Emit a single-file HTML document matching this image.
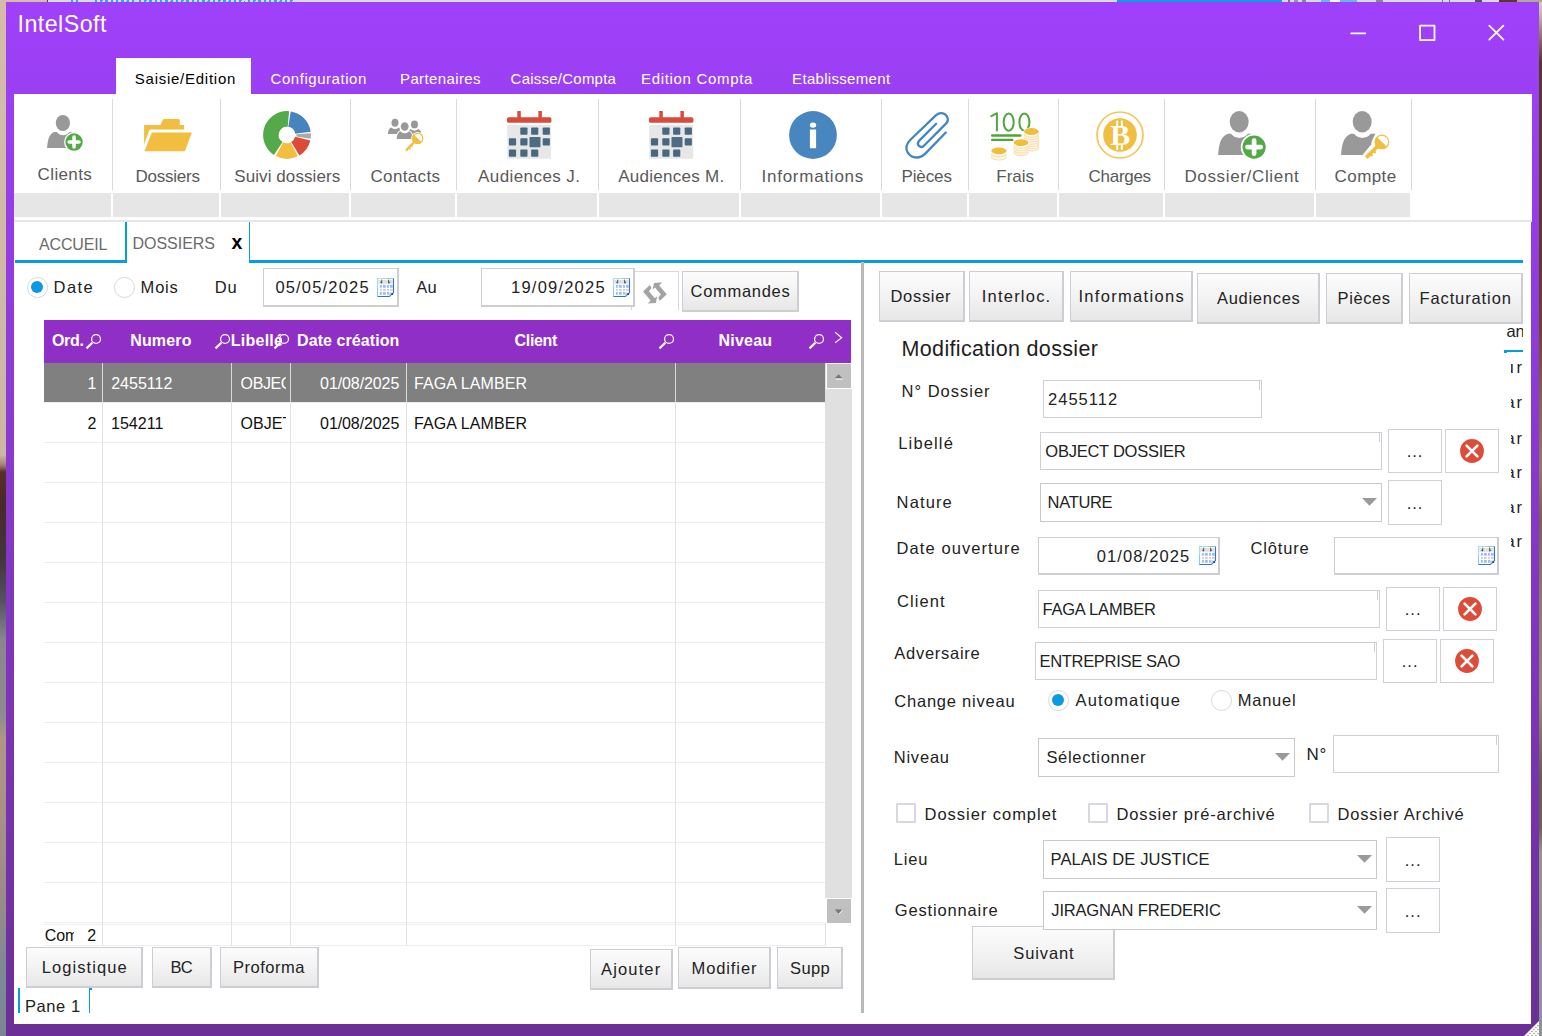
<!DOCTYPE html>
<html lang="fr"><head><meta charset="utf-8"><title>IntelSoft</title>
<style>
html,body{margin:0;padding:0;}
body{width:1542px;height:1036px;position:relative;overflow:hidden;background:#d6bba9;font-family:"Liberation Sans",sans-serif;}
div{position:absolute;box-sizing:border-box;}
svg{position:absolute;overflow:visible;}
.t{white-space:nowrap;font-family:"Liberation Sans",sans-serif;}
.btn{border-style:solid;border-color:#cdced3;border-width:1px 2px 2px 1px;background:linear-gradient(180deg,#fcfcfc 0%,#f4f4f4 45%,#e7e7e7 100%);}
.inp{border-style:solid;border-color:#cdced4;border-width:1px 2px 2px 1px;background:#fff;}
.sq{border:1px solid #d0d1d7;background:#fff;}
.sep{background:#dadada;}
.gb{background:#e6e6e6;}
.txt{border:1px solid #cfd0d6;background:#fff;}
.txt::after{content:'';position:absolute;right:0;top:0;width:1px;height:9px;background:#cfd0d6;right:0.8px;}
.sel{border:1px solid #c9c9c9;background:#fff;}

</style></head>
<body>
<div style="left:0px;top:0px;width:8px;height:1036px;background:linear-gradient(180deg,#d6bba9 0px,#cdb6a5 455px,#a57f7b 465px,#5a2e2a 472px,#48292b 505px,#45353d 560px,#555060 600px,#8a8590 640px,#8f8a90 715px,#b09585 740px,#a89088 820px,#9a8a8a 900px,#7f8a95 960px,#7a8793 1036px);"></div>
<div style="left:1536px;top:0px;width:6px;height:1036px;background:linear-gradient(180deg,#d4ccbc 0px,#c9bdb2 12px,#8a6a58 40px,#5a3828 62px,#5f3c2a 260px,#6b4630 330px,#84644f 400px,#94786a 470px,#7a6050 520px,#8c7c6e 600px,#978a7c 700px,#6a5e54 776px,#6a6258 828px,#94948e 852px,#8a9498 1036px);"></div>
<div style="left:0px;top:0px;width:1542px;height:2px;background:#d9dbd8;"></div>
<div style="left:0px;top:0px;width:47px;height:2px;background:#d6bba9;"></div>
<div style="left:47px;top:0px;width:1.2px;height:2px;background:#444;"></div>
<div style="left:1117px;top:0px;width:165px;height:2px;background:#0b9de6;"></div>
<div style="left:71px;top:0px;width:7px;height:2px;background:repeating-linear-gradient(100deg,#2aa6ea 0px,#2aa6ea 2.4px,#d9dbd8 2.4px,#d9dbd8 5.2px);"></div>
<div style="left:95px;top:0px;width:40px;height:2px;background:repeating-linear-gradient(100deg,#2aa6ea 0px,#2aa6ea 2.4px,#d9dbd8 2.4px,#d9dbd8 5.2px);"></div>
<div style="left:139px;top:0px;width:106px;height:2px;background:repeating-linear-gradient(100deg,#2aa6ea 0px,#2aa6ea 2.4px,#d9dbd8 2.4px,#d9dbd8 5.2px);"></div>
<div style="left:248px;top:0px;width:46px;height:2px;background:repeating-linear-gradient(100deg,#2aa6ea 0px,#2aa6ea 2.4px,#d9dbd8 2.4px,#d9dbd8 5.2px);"></div>
<div style="left:1288px;top:0px;width:2px;height:2px;background:#777;"></div>
<div style="left:1294px;top:0px;width:4px;height:2px;background:#999;"></div>
<div style="left:1302px;top:0px;width:4px;height:2px;background:#888;"></div>
<div style="left:1321px;top:0px;width:9px;height:2px;background:#6ab4ee;"></div>
<div style="left:1330px;top:0px;width:10px;height:2px;background:#f4f8fc;"></div>
<div style="left:1340px;top:0px;width:17px;height:2px;background:#6ab4ee;"></div>
<div style="left:1376px;top:0px;width:7px;height:2px;background:#888;"></div>
<div style="left:1442px;top:0px;width:1px;height:2px;background:#777;"></div>
<div style="left:1449px;top:0px;width:1px;height:2px;background:#777;"></div>
<div style="left:1475px;top:0px;width:7px;height:2px;background:#555;"></div>
<div style="left:1499px;top:0px;width:18px;height:2px;background:#5e3626;"></div>
<div style="left:1517px;top:0px;width:25px;height:2px;background:#b5a595;"></div>
<div style="left:6px;top:2px;width:1532.6px;height:1034px;background:linear-gradient(180deg,#9f41fb 0%,#6b2f96 100%);"></div>
<svg style="left:1340px;top:16px" width="180" height="34" viewBox="1340 16 180 34"><g stroke="#fff" stroke-width="1.8" fill="none" stroke-linecap="round" stroke-linejoin="round"><path d="M1351.2 33.3H1365.3"/><rect x="1420.1" y="25.7" width="14.4" height="14.4"/><path d="M1489.3 25.6L1503.4 39.6M1503.4 25.6L1489.3 39.6"/></g></svg>
<div style="left:116px;top:58px;width:135px;height:37px;background:#fff;"></div>
<div style="left:14px;top:94px;width:1517px;height:930px;background:#fff;"></div>
<div style="left:14px;top:94px;width:1518px;height:128px;background:#fff;"></div>
<div class="sep" style="left:111.8px;top:99px;width:1.4px;height:91px;"></div>
<div class="sep" style="left:219.8px;top:99px;width:1.4px;height:91px;"></div>
<div class="sep" style="left:349.8px;top:99px;width:1.4px;height:91px;"></div>
<div class="sep" style="left:455.8px;top:99px;width:1.4px;height:91px;"></div>
<div class="sep" style="left:597.8px;top:99px;width:1.4px;height:91px;"></div>
<div class="sep" style="left:739.8px;top:99px;width:1.4px;height:91px;"></div>
<div class="sep" style="left:880.8px;top:99px;width:1.4px;height:91px;"></div>
<div class="sep" style="left:967.8px;top:99px;width:1.4px;height:91px;"></div>
<div class="sep" style="left:1057.8px;top:99px;width:1.4px;height:91px;"></div>
<div class="sep" style="left:1163.8px;top:99px;width:1.4px;height:91px;"></div>
<div class="sep" style="left:1314.8px;top:99px;width:1.4px;height:91px;"></div>
<div class="sep" style="left:1410.8px;top:99px;width:1.4px;height:91px;"></div>
<div class="gb" style="left:14px;top:193px;width:97px;height:24px;"></div>
<div class="gb" style="left:113px;top:193px;width:106px;height:24px;"></div>
<div class="gb" style="left:221px;top:193px;width:128px;height:24px;"></div>
<div class="gb" style="left:351px;top:193px;width:104px;height:24px;"></div>
<div class="gb" style="left:457px;top:193px;width:140px;height:24px;"></div>
<div class="gb" style="left:599px;top:193px;width:140px;height:24px;"></div>
<div class="gb" style="left:741px;top:193px;width:139px;height:24px;"></div>
<div class="gb" style="left:882px;top:193px;width:85px;height:24px;"></div>
<div class="gb" style="left:969px;top:193px;width:88px;height:24px;"></div>
<div class="gb" style="left:1059px;top:193px;width:104px;height:24px;"></div>
<div class="gb" style="left:1165px;top:193px;width:149px;height:24px;"></div>
<div class="gb" style="left:1316px;top:193px;width:94px;height:24px;"></div>
<div style="left:14px;top:220px;width:1518px;height:2px;background:#e6e6e6;"></div>
<svg style="left:46.7px;top:114.8px" width="36.2" height="36.2" viewBox="0 0 48.3 48.3"><path d="M0.1 43.9 C0.8 34 2.5 25 10 22.7 L32.5 22.7 C35 23.5 36.5 25 38 28 L38 43.9 Z" fill="#999999"/><circle cx="21.4" cy="16.6" r="10.4" fill="#fff"/><ellipse cx="21.2" cy="10.7" rx="9.5" ry="10.7" fill="#999999"/><circle cx="36.1" cy="36.1" r="13.3" fill="#fff"/><circle cx="36.1" cy="36.1" r="11.6" fill="#53a946"/><path d="M29.5 36.1H42.7M36.1 29.5V42.7" stroke="#fff" stroke-width="4.7" stroke-linecap="round"/></svg>
<svg style="left:140px;top:110px" width="56" height="50" viewBox="0 0 56 50"><path d="M4.1 14.9 L20.6 14.9 L22.8 9.8 Q23.3 9 24.3 9 L38.3 9 Q39.8 9 39.8 10.5 L39.8 14.9 L44.1 14.9 L44.1 19.5 L11 19.5 Q9.5 19.5 9 21 L4.1 34.5 Z" fill="#f1be3f"/><path d="M11.9 22.5 L51.9 22.5 L45.2 40.3 Q44.8 41.2 43.8 41.2 L4.4 41.2 Z" fill="#f1be3f"/></svg>
<svg style="left:262.9px;top:110.9px" width="48" height="48" viewBox="0 0 48 48"><path d="M10.98 44.04 A23.9 23.9 0 0 1 26.08 0.19 L24.72 15.73 A8.3 8.3 0 0 0 19.48 30.96 Z" fill="#54a948"/><path d="M27.74 0.39 A23.9 23.9 0 0 1 47.67 20.67 L32.22 22.84 A8.3 8.3 0 0 0 25.30 15.80 Z" fill="#4784bd"/><path d="M47.84 22.33 A23.9 23.9 0 0 1 47.61 27.74 L33.38 25.49 A9.5 9.5 0 0 0 33.48 23.34 Z" fill="#a9abab"/><path d="M47.29 29.38 A23.9 23.9 0 0 1 36.31 44.49 L28.27 31.11 A8.3 8.3 0 0 0 32.09 25.87 Z" fill="#dc4a38"/><path d="M34.85 45.30 A23.9 23.9 0 0 1 12.78 45.10 L20.10 31.33 A8.3 8.3 0 0 0 27.77 31.40 Z" fill="#f1be3f"/></svg>
<svg style="left:380px;top:110px" width="50" height="50" viewBox="0 0 50 50"><path d="M27.28 25.61 C27.68 21.43 28.88 19.44 31.27 18.77 L37.73 18.77 C40.12 19.44 41.32 21.43 41.72 25.61 Z" fill="#999999"/><circle cx="34.5" cy="15.83" r="4.82" fill="#fff"/><ellipse cx="34.5" cy="14.400000000000006" rx="3.52" ry="3.94" fill="#999999"/><path d="M7.78 24.01 C8.18 19.83 9.38 17.83 11.77 17.17 L18.23 17.17 C20.62 17.83 21.82 19.83 22.22 24.01 Z" fill="#999999"/><circle cx="15.0" cy="14.22" r="4.82" fill="#fff"/><ellipse cx="15.0" cy="12.799999999999997" rx="3.52" ry="3.94" fill="#999999"/><path d="M16.72 28.89 C17.12 24.27 18.32 22.07 21.13 21.33 L28.27 21.33 C31.08 22.07 32.28 24.27 32.68 28.89 Z" fill="#fff" stroke="#fff" stroke-width="2.4"/><path d="M16.72 28.89 C17.12 24.27 18.32 22.07 21.13 21.33 L28.27 21.33 C31.08 22.07 32.28 24.27 32.68 28.89 Z" fill="#999999"/><circle cx="24.69999999999999" cy="18.07" r="5.19" fill="#fff"/><ellipse cx="24.69999999999999" cy="16.5" rx="3.89" ry="4.35" fill="#999999"/><path d="M34.99 31.23 L26.00 40.60" stroke="#fff" stroke-width="4.2"/><circle cx="37.69999999999999" cy="28.400000000000006" r="6.5" fill="#fff"/><circle cx="37.69999999999999" cy="28.400000000000006" r="5.1" fill="#fff" stroke="#f1be3f" stroke-width="1.2"/><path d="M33.66 24.52 A5.6 5.6 0 0 0 41.74 32.28 Z" fill="#f1be3f"/><path d="M34.99 31.23 L26.00 40.60" stroke="#f1be3f" stroke-width="2.4"/><path d="M31.26 35.11 l1.56 1.50" stroke="#f1be3f" stroke-width="1.32"/><path d="M28.92 37.55 l1.56 1.50" stroke="#f1be3f" stroke-width="1.32"/></svg>
<svg style="left:506.8px;top:110.9px" width="44.4" height="47.8" viewBox="0 0 44.4 47.8"><rect x="0" y="6.2" width="44.4" height="5.6" rx="1.6" fill="#d94c3d"/><rect x="10.3" y="0" width="3.5" height="8" fill="#d94c3d"/><rect x="31.4" y="0" width="3.5" height="8" fill="#d94c3d"/><rect x="0.3" y="14" width="43.8" height="33.8" fill="#e7e7e7"/><rect x="13.3" y="16.5" width="7.2" height="7.2" rx="0.8" fill="#48687f"/><rect x="24.1" y="16.5" width="7.2" height="7.2" rx="0.8" fill="#48687f"/><rect x="35.7" y="16.5" width="7.2" height="7.2" rx="0.8" fill="#48687f"/><rect x="1.9" y="27.3" width="7.2" height="7.2" rx="0.8" fill="#48687f"/><rect x="13.3" y="27.3" width="7.2" height="7.2" rx="0.8" fill="#48687f"/><rect x="35.7" y="27.3" width="7.2" height="7.2" rx="0.8" fill="#48687f"/><rect x="1.9" y="38.6" width="7.2" height="7.2" rx="0.8" fill="#48687f"/><rect x="13.3" y="38.6" width="7.2" height="7.2" rx="0.8" fill="#48687f"/><rect x="24.1" y="38.6" width="7.2" height="7.2" rx="0.8" fill="#48687f"/><rect x="22.5" y="25.9" width="11" height="10.4" rx="0.8" fill="#4f6c82"/></svg>
<svg style="left:648.9px;top:110.9px" width="44.4" height="47.8" viewBox="0 0 44.4 47.8"><rect x="0" y="6.2" width="44.4" height="5.6" rx="1.6" fill="#d94c3d"/><rect x="10.3" y="0" width="3.5" height="8" fill="#d94c3d"/><rect x="31.4" y="0" width="3.5" height="8" fill="#d94c3d"/><rect x="0.3" y="14" width="43.8" height="33.8" fill="#e7e7e7"/><rect x="13.3" y="16.5" width="7.2" height="7.2" rx="0.8" fill="#48687f"/><rect x="24.1" y="16.5" width="7.2" height="7.2" rx="0.8" fill="#48687f"/><rect x="35.7" y="16.5" width="7.2" height="7.2" rx="0.8" fill="#48687f"/><rect x="1.9" y="27.3" width="7.2" height="7.2" rx="0.8" fill="#48687f"/><rect x="13.3" y="27.3" width="7.2" height="7.2" rx="0.8" fill="#48687f"/><rect x="35.7" y="27.3" width="7.2" height="7.2" rx="0.8" fill="#48687f"/><rect x="1.9" y="38.6" width="7.2" height="7.2" rx="0.8" fill="#48687f"/><rect x="13.3" y="38.6" width="7.2" height="7.2" rx="0.8" fill="#48687f"/><rect x="24.1" y="38.6" width="7.2" height="7.2" rx="0.8" fill="#48687f"/><rect x="22.5" y="25.9" width="11" height="10.4" rx="0.8" fill="#4f6c82"/></svg>
<svg style="left:789px;top:111px" width="48" height="48" viewBox="0 0 48 48"><circle cx="24" cy="24" r="23.9" fill="#4786be"/><ellipse cx="24" cy="14.1" rx="3.2" ry="2.6" fill="#fff"/><rect x="20.9" y="18.5" width="6.2" height="18.7" rx="0.6" fill="#fff"/></svg>
<svg style="left:900px;top:108px" width="54" height="54" viewBox="0 0 54 54"><path d="M45.8 24.5 L25.3 45.6 C21 50 12.5 52 7.6 44.4 C5 39.5 7 35 10.7 31.5 L36.1 7.2 C40 3.6 46.2 5 47.6 10 C48.6 13 47 15 44.7 16.9 L24.2 37.5 C22 40 19.3 39 18.2 36.9 C17.4 35.2 18 34 19.3 32.6 L36.1 15.8" fill="none" stroke="#4386c4" stroke-width="2.3" stroke-linecap="round" stroke-linejoin="round"/></svg>
<svg style="left:990px;top:110.5px" width="50" height="50" viewBox="0 0 50 50"><g fill="none" stroke="#4fa63d" stroke-width="2.0" stroke-linecap="round" stroke-linejoin="round"><path d="M1.4 5.2 L6.9 2.2 L6.9 19.6"/><ellipse cx="18.7" cy="11.2" rx="5" ry="8.6"/><ellipse cx="34.4" cy="11.2" rx="5" ry="8.6"/></g><rect x="1" y="23.3" width="30.5" height="2.5" rx="1.2" fill="#4fa63d"/><rect x="1" y="27.7" width="22.5" height="2.4" rx="1.2" fill="#4fa63d"/><path d="M33.9 20.6 L33.9 36.5 A7.5 3.5 0 0 0 48.9 36.5 L48.9 20.6Z" fill="#fff8ec"/><path d="M33.9 36.50 A7.5 3.5 0 0 0 48.9 36.50" fill="none" stroke="#f7deb0" stroke-width="1.1"/><path d="M33.9 34.23 A7.5 3.5 0 0 0 48.9 34.23" fill="none" stroke="#f7deb0" stroke-width="1.1"/><path d="M33.9 31.96 A7.5 3.5 0 0 0 48.9 31.96" fill="none" stroke="#f7deb0" stroke-width="1.1"/><path d="M33.9 29.69 A7.5 3.5 0 0 0 48.9 29.69" fill="none" stroke="#f7deb0" stroke-width="1.1"/><path d="M33.9 27.41 A7.5 3.5 0 0 0 48.9 27.41" fill="none" stroke="#f7deb0" stroke-width="1.1"/><path d="M33.9 25.14 A7.5 3.5 0 0 0 48.9 25.14" fill="none" stroke="#f7deb0" stroke-width="1.1"/><path d="M33.9 22.87 A7.5 3.5 0 0 0 48.9 22.87" fill="none" stroke="#f7deb0" stroke-width="1.1"/><ellipse cx="41.4" cy="20.6" rx="8.1" ry="4.1" fill="#fff"/><ellipse cx="41.4" cy="20.6" rx="7.5" ry="3.5" fill="#f3bd3c"/><path d="M23.8 31.7 L23.8 41 A7.3 3.4 0 0 0 38.4 41 L38.4 31.7Z" fill="#fff8ec"/><path d="M23.8 41.00 A7.3 3.4 0 0 0 38.4 41.00" fill="none" stroke="#f7deb0" stroke-width="1.1"/><path d="M23.8 38.67 A7.3 3.4 0 0 0 38.4 38.67" fill="none" stroke="#f7deb0" stroke-width="1.1"/><path d="M23.8 36.35 A7.3 3.4 0 0 0 38.4 36.35" fill="none" stroke="#f7deb0" stroke-width="1.1"/><path d="M23.8 34.02 A7.3 3.4 0 0 0 38.4 34.02" fill="none" stroke="#f7deb0" stroke-width="1.1"/><ellipse cx="31.1" cy="31.7" rx="7.8999999999999995" ry="4.0" fill="#fff"/><ellipse cx="31.1" cy="31.7" rx="7.3" ry="3.4" fill="#f3bd3c"/><path d="M1.3000000000000007 39.8 L1.3000000000000007 45.6 A7.6 3.4 0 0 0 16.5 45.6 L16.5 39.8Z" fill="#fff8ec"/><path d="M1.3000000000000007 45.60 A7.6 3.4 0 0 0 16.5 45.60" fill="none" stroke="#f7deb0" stroke-width="1.1"/><path d="M1.3000000000000007 42.70 A7.6 3.4 0 0 0 16.5 42.70" fill="none" stroke="#f7deb0" stroke-width="1.1"/><ellipse cx="8.9" cy="39.8" rx="8.2" ry="4.0" fill="#fff"/><ellipse cx="8.9" cy="39.8" rx="7.6" ry="3.4" fill="#f3bd3c"/></svg>
<svg style="left:1096px;top:111px" width="48" height="48" viewBox="0 0 48 48"><circle cx="24" cy="24" r="23" fill="none" stroke="#f3c55a" stroke-width="1.7"/><circle cx="24" cy="24" r="16.8" fill="#f1be3f"/><text x="14.2" y="34.3" font-family="Liberation Serif, serif" font-weight="700" font-size="30" fill="#fff">B</text><rect x="20.2" y="9.6" width="2" height="5.5" fill="#fff"/><rect x="24.8" y="9.6" width="2" height="5.5" fill="#fff"/><rect x="20.2" y="33.6" width="2" height="5.4" fill="#fff"/><rect x="24.8" y="33.6" width="2" height="5.4" fill="#fff"/></svg>
<svg style="left:1218px;top:111px" width="48.3" height="48.3" viewBox="0 0 48.3 48.3"><path d="M0.1 43.9 C0.8 34 2.5 25 10 22.7 L32.5 22.7 C35 23.5 36.5 25 38 28 L38 43.9 Z" fill="#999999"/><circle cx="21.4" cy="16.6" r="10.4" fill="#fff"/><ellipse cx="21.2" cy="10.7" rx="9.5" ry="10.7" fill="#999999"/><circle cx="36.1" cy="36.1" r="13.3" fill="#fff"/><circle cx="36.1" cy="36.1" r="11.6" fill="#53a946"/><path d="M29.5 36.1H42.7M36.1 29.5V42.7" stroke="#fff" stroke-width="4.7" stroke-linecap="round"/></svg>
<svg style="left:1341px;top:111px" width="50" height="50" viewBox="0 0 50 50"><path d="M0.1 43.9 C0.8 34 2.5 25 10 22.7 L32.5 22.7 L34.6 22.7 C32 27 30.5 30 30.2 33.5 L21.5 43.9 Z" fill="#999999"/><circle cx="21.4" cy="16.6" r="10.4" fill="#fff"/><ellipse cx="21.2" cy="10.7" rx="9.5" ry="10.7" fill="#999999"/><path d="M37.29 34.51 L25.20 46.60" stroke="#fff" stroke-width="5.6"/><circle cx="40.9" cy="30.9" r="8.2" fill="#fff"/><circle cx="40.9" cy="30.9" r="6.8" fill="#fff" stroke="#f1be3f" stroke-width="1.2"/><path d="M35.74 25.74 A7.3 7.3 0 0 0 46.06 36.06 Z" fill="#f1be3f"/><path d="M37.29 34.51 L25.20 46.60" stroke="#f1be3f" stroke-width="3.8"/><path d="M32.27 39.53 l2.42 2.42" stroke="#f1be3f" stroke-width="2.09"/><path d="M29.12 42.67 l2.42 2.42" stroke="#f1be3f" stroke-width="2.09"/></svg>
<div style="left:15px;top:260px;width:111px;height:3px;background:#059de0;"></div>
<div style="left:249px;top:260px;width:1274px;height:3px;background:#059de0;"></div>
<div style="left:125px;top:222px;width:2px;height:41px;background:#059de0;"></div>
<div style="left:248.7px;top:222px;width:1.5px;height:41px;background:#059de0;"></div>
<div style="left:27.1px;top:277.0px;width:20.8px;height:20.8px;border-radius:50%;border:1.3px solid #d6d8de;background:#fff;"></div>
<div style="left:31.1px;top:281.09999999999997px;width:12px;height:12px;border-radius:50%;background:#0a9ae3;"></div>
<div style="left:113.94999999999999px;top:277.0px;width:20.8px;height:20.8px;border-radius:50%;border:1.3px solid #d6d8de;background:#fff;"></div>
<div class="inp" style="left:263px;top:268px;width:136px;height:39px;"></div>
<svg style="left:377px;top:278px" width="17" height="19" viewBox="0 0 17 19"><path d="M0.5 0.5 H16.5 V14.6 L12.4 18.5 H0.5 Z" fill="#fff"/><path d="M0.5 18.5 V0.5 H16.5" fill="none" stroke="#8ccbe9" stroke-width="1.1"/><path d="M16.5 0.5 V14.6 L12.4 18.5 H0.5" fill="none" stroke="#3576c0" stroke-width="1.1"/><path d="M0.5 9 V0.5 H9" fill="none" stroke="#a8e0f2" stroke-width="1.1"/><rect x="1.2" y="2" width="14.6" height="3.8" fill="#e3e1e0"/><path d="M2.9 4.3 L5 2.9 V5.7Z M13.4 4.3 L11.3 2.9 V5.7Z" fill="#555"/><rect x="4.3" y="1.6" width="0.9" height="3.4" fill="#555"/><rect x="11.2" y="1.6" width="0.9" height="3.4" fill="#555"/><rect x="2.9" y="6.9" width="1.9" height="2.9" fill="#9bbcfd"/><rect x="2.9" y="11" width="1.9" height="1.8" fill="#cfcfcf"/><rect x="5.9" y="6.9" width="2.9" height="2.9" fill="#9bbcfd"/><rect x="5.9" y="11" width="2.9" height="1.8" fill="#cfcfcf"/><rect x="10" y="6.9" width="1.9" height="2.9" fill="#9bbcfd"/><rect x="10" y="11" width="1.9" height="1.8" fill="#cfcfcf"/><rect x="13" y="6.9" width="2.8" height="2.9" fill="#9bbcfd"/><rect x="13" y="11" width="2.8" height="1.8" fill="#cfcfcf"/><rect x="2.9" y="13.9" width="1.9" height="2.9" fill="#9bbcfd"/><rect x="5.9" y="13.9" width="2.9" height="2.9" fill="#9bbcfd"/><rect x="10" y="13.9" width="1.9" height="2.9" fill="#9bbcfd"/><path d="M12.2 18.2 L12.2 14.4 L16.2 14.4Z" fill="#c9c9c9"/><rect x="14.3" y="15.2" width="1.8" height="1.8" fill="#0b4aa8"/></svg>
<div style="left:631px;top:271px;width:48px;height:38.5px;border:1px solid #d8d8de;border-bottom:none;background:#fff;"></div>
<div class="inp" style="left:481px;top:268px;width:154px;height:39px;"></div>
<svg style="left:613.2px;top:278px" width="17" height="19" viewBox="0 0 17 19"><path d="M0.5 0.5 H16.5 V14.6 L12.4 18.5 H0.5 Z" fill="#fff"/><path d="M0.5 18.5 V0.5 H16.5" fill="none" stroke="#8ccbe9" stroke-width="1.1"/><path d="M16.5 0.5 V14.6 L12.4 18.5 H0.5" fill="none" stroke="#3576c0" stroke-width="1.1"/><path d="M0.5 9 V0.5 H9" fill="none" stroke="#a8e0f2" stroke-width="1.1"/><rect x="1.2" y="2" width="14.6" height="3.8" fill="#e3e1e0"/><path d="M2.9 4.3 L5 2.9 V5.7Z M13.4 4.3 L11.3 2.9 V5.7Z" fill="#555"/><rect x="4.3" y="1.6" width="0.9" height="3.4" fill="#555"/><rect x="11.2" y="1.6" width="0.9" height="3.4" fill="#555"/><rect x="2.9" y="6.9" width="1.9" height="2.9" fill="#9bbcfd"/><rect x="2.9" y="11" width="1.9" height="1.8" fill="#cfcfcf"/><rect x="5.9" y="6.9" width="2.9" height="2.9" fill="#9bbcfd"/><rect x="5.9" y="11" width="2.9" height="1.8" fill="#cfcfcf"/><rect x="10" y="6.9" width="1.9" height="2.9" fill="#9bbcfd"/><rect x="10" y="11" width="1.9" height="1.8" fill="#cfcfcf"/><rect x="13" y="6.9" width="2.8" height="2.9" fill="#9bbcfd"/><rect x="13" y="11" width="2.8" height="1.8" fill="#cfcfcf"/><rect x="2.9" y="13.9" width="1.9" height="2.9" fill="#9bbcfd"/><rect x="5.9" y="13.9" width="2.9" height="2.9" fill="#9bbcfd"/><rect x="10" y="13.9" width="1.9" height="2.9" fill="#9bbcfd"/><path d="M12.2 18.2 L12.2 14.4 L16.2 14.4Z" fill="#c9c9c9"/><rect x="14.3" y="15.2" width="1.8" height="1.8" fill="#0b4aa8"/></svg>
<svg style="left:640px;top:280px" width="30" height="26" viewBox="0 0 30 26"><path d="M9.9 5.1 L3.0 11.6 L10.6 20.4 L7.8 23.5 L15.8 22.9 L17.2 16.2 L14.8 18.3 L8.9 11.2 L11.6 8.0Z" fill="#a2a4a2"/><path d="M19.9 20.7 L26.8 14.2 L19.2 5.4 L22.0 2.3 L14.0 2.9 L12.6 9.6 L15.0 7.5 L20.9 14.6 L18.2 17.8Z" fill="#a2a4a2"/></svg>
<div class="btn" style="left:682px;top:271px;width:117px;height:41px;"></div>
<div style="left:44px;top:320px;width:807px;height:43px;background:#902fc6;"></div>
<svg style="left:84.0px;top:328px" width="24" height="24" viewBox="0 0 24 24"><circle cx="12.05" cy="11" r="4.45" fill="none" stroke="#fff" stroke-width="1.25"/><path d="M8.3 14.8 L2.5 20.4" stroke="#fff" stroke-width="2.2"/></svg>
<svg style="left:212.89999999999998px;top:328px" width="24" height="24" viewBox="0 0 24 24"><circle cx="12.05" cy="11" r="4.45" fill="none" stroke="#fff" stroke-width="1.25"/><path d="M8.3 14.8 L2.5 20.4" stroke="#fff" stroke-width="2.2"/></svg>
<svg style="left:272.25px;top:328px" width="24" height="24" viewBox="0 0 24 24"><circle cx="12.05" cy="11" r="4.45" fill="none" stroke="#fff" stroke-width="1.25"/><path d="M8.3 14.8 L2.5 20.4" stroke="#fff" stroke-width="2.2"/></svg>
<svg style="left:656.85px;top:328px" width="24" height="24" viewBox="0 0 24 24"><circle cx="12.05" cy="11" r="4.45" fill="none" stroke="#fff" stroke-width="1.25"/><path d="M8.3 14.8 L2.5 20.4" stroke="#fff" stroke-width="2.2"/></svg>
<svg style="left:806.85px;top:328px" width="24" height="24" viewBox="0 0 24 24"><circle cx="12.05" cy="11" r="4.45" fill="none" stroke="#fff" stroke-width="1.25"/><path d="M8.3 14.8 L2.5 20.4" stroke="#fff" stroke-width="2.2"/></svg>
<svg style="left:834px;top:331px" width="10" height="14" viewBox="0 0 10 14"><path d="M1.1 1.3 L7.7 6.7 L1.1 11.7" fill="none" stroke="#fff" stroke-width="1.1"/></svg>
<div style="left:44px;top:402px;width:781px;height:1px;background:#eeeeee;"></div>
<div style="left:44px;top:442px;width:781px;height:1px;background:#eeeeee;"></div>
<div style="left:44px;top:482px;width:781px;height:1px;background:#eeeeee;"></div>
<div style="left:44px;top:522px;width:781px;height:1px;background:#eeeeee;"></div>
<div style="left:44px;top:562px;width:781px;height:1px;background:#eeeeee;"></div>
<div style="left:44px;top:602px;width:781px;height:1px;background:#eeeeee;"></div>
<div style="left:44px;top:642px;width:781px;height:1px;background:#eeeeee;"></div>
<div style="left:44px;top:682px;width:781px;height:1px;background:#eeeeee;"></div>
<div style="left:44px;top:722px;width:781px;height:1px;background:#eeeeee;"></div>
<div style="left:44px;top:762px;width:781px;height:1px;background:#eeeeee;"></div>
<div style="left:44px;top:802px;width:781px;height:1px;background:#eeeeee;"></div>
<div style="left:44px;top:842px;width:781px;height:1px;background:#eeeeee;"></div>
<div style="left:44px;top:882px;width:781px;height:1px;background:#eeeeee;"></div>
<div style="left:44px;top:922px;width:781px;height:1px;background:#eeeeee;"></div>
<div style="left:44px;top:924px;width:781px;height:1px;background:#eeeeee;"></div>
<div style="left:44px;top:945px;width:781px;height:1px;background:#eeeeee;"></div>
<div style="left:102px;top:363px;width:1px;height:583px;background:#e3e3e3;"></div>
<div style="left:231px;top:363px;width:1px;height:583px;background:#e3e3e3;"></div>
<div style="left:290px;top:363px;width:1px;height:583px;background:#e3e3e3;"></div>
<div style="left:406px;top:363px;width:1px;height:583px;background:#e3e3e3;"></div>
<div style="left:675px;top:363px;width:1px;height:583px;background:#e3e3e3;"></div>
<div style="left:825px;top:923px;width:1px;height:23px;background:#e3e3e3;"></div>
<div style="left:44px;top:363px;width:781px;height:39px;background:#808080;"></div>
<div style="left:102px;top:363px;width:1px;height:39px;background:#d9d9d9;"></div>
<div style="left:231px;top:363px;width:1px;height:39px;background:#d9d9d9;"></div>
<div style="left:290px;top:363px;width:1px;height:39px;background:#d9d9d9;"></div>
<div style="left:406px;top:363px;width:1px;height:39px;background:#d9d9d9;"></div>
<div style="left:675px;top:363px;width:1px;height:39px;background:#d9d9d9;"></div>
<div style="left:825px;top:363px;width:27px;height:535px;background:#e0e0e0;"></div>
<div style="left:826px;top:363px;width:26px;height:26px;background:#fff;"></div>
<div style="left:827px;top:364px;width:24px;height:24px;background:#c0c0c0;"></div>
<div style="left:826px;top:898px;width:26px;height:26px;background:#fff;"></div>
<div style="left:827px;top:899px;width:24px;height:24px;background:#c0c0c0;"></div>
<svg style="left:834px;top:373.2px" width="10" height="8" viewBox="0 0 10 8"><path d="M0.8 5.2 L4.6 1.2 L8.4 5.2Z" fill="#777"/><rect x="1.6" y="5.6" width="7" height="0.9" fill="#fff"/></svg>
<svg style="left:834px;top:907.5px" width="10" height="8" viewBox="0 0 10 8"><path d="M0.8 1.6 L8.4 1.6 L4.6 5.8Z" fill="#777"/><path d="M5.2 5.8 L8.6 2.2" stroke="#fff" stroke-width="0.9"/></svg>
<div style="left:861px;top:262px;width:3px;height:751px;background:#b9b9b9;"></div>
<div class="btn" style="left:26px;top:947px;width:117px;height:41px;"></div>
<div class="btn" style="left:152px;top:947px;width:60px;height:41px;"></div>
<div class="btn" style="left:220px;top:947px;width:99px;height:41px;"></div>
<div class="btn" style="left:590px;top:949px;width:83px;height:41px;"></div>
<div class="btn" style="left:678px;top:947px;width:93px;height:42px;"></div>
<div class="btn" style="left:777px;top:947px;width:66px;height:42px;"></div>
<div style="left:17.6px;top:988px;width:2px;height:25px;background:#059de0;"></div>
<div style="left:89px;top:988px;width:1.3px;height:25px;background:#059de0;"></div>
<div style="left:89px;top:988px;width:3px;height:1.5px;background:#059de0;"></div>
<div class="btn" style="left:879px;top:271px;width:86px;height:51px;"></div>
<div class="btn" style="left:969px;top:271px;width:95px;height:51px;"></div>
<div class="btn" style="left:1070px;top:271px;width:123px;height:51px;"></div>
<div class="btn" style="left:1197px;top:273px;width:123px;height:51px;"></div>
<div class="btn" style="left:1326px;top:273px;width:77px;height:51px;"></div>
<div class="btn" style="left:1409px;top:273px;width:114px;height:51px;"></div>
<div class="txt" style="left:1043px;top:380px;width:219px;height:38px;"></div>
<div class="txt" style="left:1040px;top:432px;width:342px;height:38px;"></div>
<div class="sq" style="left:1388px;top:429px;width:54px;height:44px;"></div>
<div class="sq" style="left:1445px;top:429px;width:54px;height:44px;"></div>
<svg style="left:1459px;top:438.1px" width="26" height="26" viewBox="0 0 26 26"><circle cx="13" cy="13" r="11.9" fill="#dd4b39"/><path d="M7.6 7.6 L18.4 18.4 M18.4 7.6 L7.6 18.4" stroke="#fff" stroke-width="2.7" stroke-linecap="round"/></svg>
<div class="sel" style="left:1040px;top:483px;width:342px;height:39px;"></div>
<svg style="left:1362.4px;top:498.2px" width="15" height="8" viewBox="0 0 15 8"><path d="M0 0 H15 L7.5 7.8Z" fill="#9a9a9a"/></svg>
<div class="sq" style="left:1388px;top:480px;width:54px;height:45px;"></div>
<div class="inp" style="left:1038px;top:537px;width:182px;height:37.5px;"></div>
<svg style="left:1199px;top:546.3px" width="17" height="19" viewBox="0 0 17 19"><path d="M0.5 0.5 H16.5 V14.6 L12.4 18.5 H0.5 Z" fill="#fff"/><path d="M0.5 18.5 V0.5 H16.5" fill="none" stroke="#8ccbe9" stroke-width="1.1"/><path d="M16.5 0.5 V14.6 L12.4 18.5 H0.5" fill="none" stroke="#3576c0" stroke-width="1.1"/><path d="M0.5 9 V0.5 H9" fill="none" stroke="#a8e0f2" stroke-width="1.1"/><rect x="1.2" y="2" width="14.6" height="3.8" fill="#e3e1e0"/><path d="M2.9 4.3 L5 2.9 V5.7Z M13.4 4.3 L11.3 2.9 V5.7Z" fill="#555"/><rect x="4.3" y="1.6" width="0.9" height="3.4" fill="#555"/><rect x="11.2" y="1.6" width="0.9" height="3.4" fill="#555"/><rect x="2.9" y="6.9" width="1.9" height="2.9" fill="#9bbcfd"/><rect x="2.9" y="11" width="1.9" height="1.8" fill="#cfcfcf"/><rect x="5.9" y="6.9" width="2.9" height="2.9" fill="#9bbcfd"/><rect x="5.9" y="11" width="2.9" height="1.8" fill="#cfcfcf"/><rect x="10" y="6.9" width="1.9" height="2.9" fill="#9bbcfd"/><rect x="10" y="11" width="1.9" height="1.8" fill="#cfcfcf"/><rect x="13" y="6.9" width="2.8" height="2.9" fill="#9bbcfd"/><rect x="13" y="11" width="2.8" height="1.8" fill="#cfcfcf"/><rect x="2.9" y="13.9" width="1.9" height="2.9" fill="#9bbcfd"/><rect x="5.9" y="13.9" width="2.9" height="2.9" fill="#9bbcfd"/><rect x="10" y="13.9" width="1.9" height="2.9" fill="#9bbcfd"/><path d="M12.2 18.2 L12.2 14.4 L16.2 14.4Z" fill="#c9c9c9"/><rect x="14.3" y="15.2" width="1.8" height="1.8" fill="#0b4aa8"/></svg>
<div class="inp" style="left:1334px;top:537px;width:165px;height:37.5px;"></div>
<svg style="left:1477.6px;top:546.3px" width="17" height="19" viewBox="0 0 17 19"><path d="M0.5 0.5 H16.5 V14.6 L12.4 18.5 H0.5 Z" fill="#fff"/><path d="M0.5 18.5 V0.5 H16.5" fill="none" stroke="#8ccbe9" stroke-width="1.1"/><path d="M16.5 0.5 V14.6 L12.4 18.5 H0.5" fill="none" stroke="#3576c0" stroke-width="1.1"/><path d="M0.5 9 V0.5 H9" fill="none" stroke="#a8e0f2" stroke-width="1.1"/><rect x="1.2" y="2" width="14.6" height="3.8" fill="#e3e1e0"/><path d="M2.9 4.3 L5 2.9 V5.7Z M13.4 4.3 L11.3 2.9 V5.7Z" fill="#555"/><rect x="4.3" y="1.6" width="0.9" height="3.4" fill="#555"/><rect x="11.2" y="1.6" width="0.9" height="3.4" fill="#555"/><rect x="2.9" y="6.9" width="1.9" height="2.9" fill="#9bbcfd"/><rect x="2.9" y="11" width="1.9" height="1.8" fill="#cfcfcf"/><rect x="5.9" y="6.9" width="2.9" height="2.9" fill="#9bbcfd"/><rect x="5.9" y="11" width="2.9" height="1.8" fill="#cfcfcf"/><rect x="10" y="6.9" width="1.9" height="2.9" fill="#9bbcfd"/><rect x="10" y="11" width="1.9" height="1.8" fill="#cfcfcf"/><rect x="13" y="6.9" width="2.8" height="2.9" fill="#9bbcfd"/><rect x="13" y="11" width="2.8" height="1.8" fill="#cfcfcf"/><rect x="2.9" y="13.9" width="1.9" height="2.9" fill="#9bbcfd"/><rect x="5.9" y="13.9" width="2.9" height="2.9" fill="#9bbcfd"/><rect x="10" y="13.9" width="1.9" height="2.9" fill="#9bbcfd"/><path d="M12.2 18.2 L12.2 14.4 L16.2 14.4Z" fill="#c9c9c9"/><rect x="14.3" y="15.2" width="1.8" height="1.8" fill="#0b4aa8"/></svg>
<div class="txt" style="left:1038px;top:590px;width:342px;height:38px;"></div>
<div class="sq" style="left:1386px;top:587px;width:54px;height:44px;"></div>
<div class="sq" style="left:1443px;top:587px;width:54px;height:44px;"></div>
<svg style="left:1456.9px;top:596.0px" width="26" height="26" viewBox="0 0 26 26"><circle cx="13" cy="13" r="11.9" fill="#dd4b39"/><path d="M7.6 7.6 L18.4 18.4 M18.4 7.6 L7.6 18.4" stroke="#fff" stroke-width="2.7" stroke-linecap="round"/></svg>
<div class="txt" style="left:1035px;top:642px;width:342px;height:38px;"></div>
<div class="sq" style="left:1383px;top:639px;width:54px;height:44px;"></div>
<div class="sq" style="left:1440px;top:639px;width:54px;height:44px;"></div>
<svg style="left:1453.9px;top:647.9px" width="26" height="26" viewBox="0 0 26 26"><circle cx="13" cy="13" r="11.9" fill="#dd4b39"/><path d="M7.6 7.6 L18.4 18.4 M18.4 7.6 L7.6 18.4" stroke="#fff" stroke-width="2.7" stroke-linecap="round"/></svg>
<div style="left:1048.0px;top:689.95px;width:20.8px;height:20.8px;border-radius:50%;border:1.3px solid #d6d8de;background:#fff;"></div>
<div style="left:1052.0px;top:694.0500000000001px;width:12px;height:12px;border-radius:50%;background:#0a9ae3;"></div>
<div style="left:1210.8999999999999px;top:689.95px;width:20.8px;height:20.8px;border-radius:50%;border:1.3px solid #d6d8de;background:#fff;"></div>
<div class="sel" style="left:1038px;top:738px;width:257px;height:39px;"></div>
<svg style="left:1275px;top:753.2px" width="15" height="8" viewBox="0 0 15 8"><path d="M0 0 H15 L7.5 7.8Z" fill="#9a9a9a"/></svg>
<div class="txt" style="left:1333px;top:735px;width:166px;height:38px;"></div>
<div style="left:896px;top:803.2px;width:20px;height:19.6px;border:2px solid #d8d8e0;background:#fff;border-radius:1px;"></div>
<div style="left:1088px;top:803.2px;width:20px;height:19.6px;border:2px solid #d8d8e0;background:#fff;border-radius:1px;"></div>
<div style="left:1309px;top:803.2px;width:20px;height:19.6px;border:2px solid #d8d8e0;background:#fff;border-radius:1px;"></div>
<div class="sel" style="left:1043px;top:840px;width:334px;height:38.5px;"></div>
<svg style="left:1357.2px;top:854.9px" width="15" height="8" viewBox="0 0 15 8"><path d="M0 0 H15 L7.5 7.8Z" fill="#9a9a9a"/></svg>
<div class="sq" style="left:1386px;top:837px;width:54px;height:44.5px;"></div>
<div class="btn" style="left:972px;top:926px;width:143px;height:54px;"></div>
<div class="sel" style="left:1043px;top:891px;width:334px;height:38.5px;"></div>
<svg style="left:1357.2px;top:906.0px" width="15" height="8" viewBox="0 0 15 8"><path d="M0 0 H15 L7.5 7.8Z" fill="#9a9a9a"/></svg>
<div class="sq" style="left:1386px;top:888px;width:54px;height:45px;"></div>
<div style="left:1504px;top:350.2px;width:19px;height:1.4px;background:#059de0;"></div>
<div style="left:1504px;top:350.2px;width:2.8px;height:2.8px;background:#059de0;"></div>
<svg style="left:1522px;top:1019px" width="17" height="17" viewBox="0 0 17 17"><path d="M2 17 L17 2 L17 17Z" fill="#fff"/><g stroke="#a9a9a9" stroke-width="1.5" stroke-dasharray="1.4 1.4"><path d="M5.5 17 L17 5.5M9.5 17 L17 9.5M13.5 17 L17 13.5"/></g></svg>
<div class="t" style="left:17.50px;top:10.00px;font-size:23.2px;line-height:29px;color:#fff;letter-spacing:0.483px;">IntelSoft</div>
<div class="t" style="left:134.80px;top:69.00px;font-size:15px;line-height:19px;color:#000;letter-spacing:0.742px;">Saisie/Edition</div>
<div class="t" style="left:270.60px;top:69.00px;font-size:15px;line-height:19px;color:#fff;letter-spacing:0.534px;">Configuration</div>
<div class="t" style="left:400.00px;top:69.00px;font-size:15px;line-height:19px;color:#fff;letter-spacing:0.378px;">Partenaires</div>
<div class="t" style="left:510.60px;top:69.00px;font-size:15px;line-height:19px;color:#fff;letter-spacing:0.233px;">Caisse/Compta</div>
<div class="t" style="left:641.00px;top:69.00px;font-size:15px;line-height:19px;color:#fff;letter-spacing:0.675px;">Edition Compta</div>
<div class="t" style="left:792.10px;top:69.00px;font-size:15px;line-height:19px;color:#fff;letter-spacing:0.312px;">Etablissement</div>
<div class="t" style="left:37.60px;top:164.00px;font-size:17px;line-height:21px;color:#595959;letter-spacing:0.372px;">Clients</div>
<div class="t" style="left:135.60px;top:166.00px;font-size:17px;line-height:21px;color:#595959;letter-spacing:-0.246px;">Dossiers</div>
<div class="t" style="left:234.30px;top:166.00px;font-size:17px;line-height:21px;color:#595959;letter-spacing:0.079px;">Suivi dossiers</div>
<div class="t" style="left:370.50px;top:166.00px;font-size:17px;line-height:21px;color:#595959;letter-spacing:0.344px;">Contacts</div>
<div class="t" style="left:478.00px;top:166.00px;font-size:17px;line-height:21px;color:#595959;letter-spacing:0.425px;">Audiences J.</div>
<div class="t" style="left:618.20px;top:166.00px;font-size:17px;line-height:21px;color:#595959;letter-spacing:0.275px;">Audiences M.</div>
<div class="t" style="left:761.50px;top:166.00px;font-size:17px;line-height:21px;color:#595959;letter-spacing:0.750px;">Informations</div>
<div class="t" style="left:901.40px;top:166.00px;font-size:17px;line-height:21px;color:#595959;letter-spacing:-0.086px;">Pièces</div>
<div class="t" style="left:996.30px;top:166.00px;font-size:17px;line-height:21px;color:#595959;">Frais</div>
<div class="t" style="left:1088.60px;top:166.00px;font-size:17px;line-height:21px;color:#595959;letter-spacing:-0.294px;">Charges</div>
<div class="t" style="left:1184.40px;top:166.00px;font-size:17px;line-height:21px;color:#595959;letter-spacing:0.655px;">Dossier/Client</div>
<div class="t" style="left:1334.60px;top:166.00px;font-size:17px;line-height:21px;color:#595959;letter-spacing:0.405px;">Compte</div>
<div class="t" style="left:39.00px;top:235.00px;font-size:16px;line-height:20px;color:#6b6b6b;letter-spacing:-0.160px;">ACCUEIL</div>
<div class="t" style="left:132.50px;top:234.00px;font-size:16px;line-height:20px;color:#6b6b6b;letter-spacing:-0.031px;">DOSSIERS</div>
<div class="t" style="left:231.60px;top:230.00px;font-size:19.5px;line-height:24px;color:#000;font-weight:700;">x</div>
<div class="t" style="left:53.50px;top:277.00px;font-size:16.5px;line-height:21px;color:#222;letter-spacing:1.472px;">Date</div>
<div class="t" style="left:140.60px;top:277.00px;font-size:16.5px;line-height:21px;color:#222;letter-spacing:0.802px;">Mois</div>
<div class="t" style="left:214.70px;top:277.00px;font-size:16.5px;line-height:21px;color:#222;letter-spacing:0.783px;">Du</div>
<div class="t" style="left:275.40px;top:277.00px;font-size:16.5px;line-height:21px;color:#222;letter-spacing:1.176px;">05/05/2025</div>
<div class="t" style="left:416.20px;top:277.00px;font-size:16.5px;line-height:21px;color:#222;letter-spacing:0.289px;">Au</div>
<div class="t" style="left:511.10px;top:277.00px;font-size:16.5px;line-height:21px;color:#222;letter-spacing:1.209px;">19/09/2025</div>
<div class="t" style="left:690.50px;top:281.00px;font-size:16.5px;line-height:21px;color:#222;letter-spacing:0.713px;">Commandes</div>
<div class="t" style="left:51.90px;top:331.00px;font-size:16px;line-height:20px;color:#fff;font-weight:700;letter-spacing:-0.248px;">Ord.</div>
<div class="t" style="left:130.20px;top:331.00px;font-size:16px;line-height:20px;color:#fff;font-weight:700;letter-spacing:0.164px;">Numero</div>
<div class="t" style="left:230.80px;top:331.00px;font-size:16px;line-height:20px;color:#fff;font-weight:700;letter-spacing:0.235px;width:51.50px;overflow:hidden;">Libellé</div>
<div class="t" style="left:297.10px;top:331.00px;font-size:16px;line-height:20px;color:#fff;font-weight:700;letter-spacing:0.067px;">Date création</div>
<div class="t" style="left:514.50px;top:331.00px;font-size:16px;line-height:20px;color:#fff;font-weight:700;letter-spacing:-0.305px;">Client</div>
<div class="t" style="left:718.60px;top:331.00px;font-size:16px;line-height:20px;color:#fff;font-weight:700;letter-spacing:0.201px;">Niveau</div>
<div class="t" style="left:87.50px;top:374.00px;font-size:16px;line-height:20px;color:#fff;">1</div>
<div class="t" style="left:111.20px;top:374.00px;font-size:16px;line-height:20px;color:#fff;letter-spacing:0.015px;">2455112</div>
<div class="t" style="left:240.60px;top:374.00px;font-size:16px;line-height:20px;color:#fff;letter-spacing:-0.390px;width:45.30px;overflow:hidden;">OBJECT</div>
<div class="t" style="left:320.10px;top:374.00px;font-size:16px;line-height:20px;color:#fff;letter-spacing:-0.098px;">01/08/2025</div>
<div class="t" style="left:414.10px;top:374.00px;font-size:16px;line-height:20px;color:#fff;letter-spacing:0.081px;">FAGA LAMBER</div>
<div class="t" style="left:87.60px;top:414.00px;font-size:16px;line-height:20px;color:#111;">2</div>
<div class="t" style="left:111.00px;top:414.00px;font-size:16px;line-height:20px;color:#111;letter-spacing:0.039px;">154211</div>
<div class="t" style="left:240.60px;top:414.00px;font-size:16px;line-height:20px;color:#111;letter-spacing:0.028px;width:45.30px;overflow:hidden;">OBJET</div>
<div class="t" style="left:320.10px;top:414.00px;font-size:16px;line-height:20px;color:#111;letter-spacing:-0.098px;">01/08/2025</div>
<div class="t" style="left:414.10px;top:414.00px;font-size:16px;line-height:20px;color:#111;letter-spacing:0.081px;">FAGA LAMBER</div>
<div class="t" style="left:44.80px;top:926.00px;font-size:16px;line-height:20px;color:#111;letter-spacing:-0.187px;width:29.50px;overflow:hidden;">Compte</div>
<div class="t" style="left:87.20px;top:926.00px;font-size:16px;line-height:20px;color:#111;">2</div>
<div class="t" style="left:41.70px;top:957.00px;font-size:16.5px;line-height:21px;color:#222;letter-spacing:1.094px;">Logistique</div>
<div class="t" style="left:170.60px;top:957.00px;font-size:16.5px;line-height:21px;color:#222;letter-spacing:-0.806px;">BC</div>
<div class="t" style="left:233.00px;top:957.00px;font-size:16.5px;line-height:21px;color:#222;letter-spacing:0.517px;">Proforma</div>
<div class="t" style="left:601.00px;top:959.00px;font-size:16.5px;line-height:21px;color:#222;letter-spacing:1.152px;">Ajouter</div>
<div class="t" style="left:691.50px;top:958.00px;font-size:16.5px;line-height:21px;color:#222;letter-spacing:0.901px;">Modifier</div>
<div class="t" style="left:790.10px;top:958.00px;font-size:16.5px;line-height:21px;color:#222;letter-spacing:0.377px;">Supp</div>
<div class="t" style="left:25.00px;top:996.00px;font-size:16.5px;line-height:21px;color:#222;letter-spacing:0.556px;">Pane 1</div>
<div class="t" style="left:890.50px;top:286.00px;font-size:16.5px;line-height:21px;color:#222;letter-spacing:0.693px;">Dossier</div>
<div class="t" style="left:981.80px;top:286.00px;font-size:16.5px;line-height:21px;color:#222;letter-spacing:1.210px;">Interloc.</div>
<div class="t" style="left:1078.40px;top:286.00px;font-size:16.5px;line-height:21px;color:#222;letter-spacing:1.323px;">Informations</div>
<div class="t" style="left:1216.90px;top:288.00px;font-size:16.5px;line-height:21px;color:#222;letter-spacing:0.736px;">Audiences</div>
<div class="t" style="left:1337.60px;top:288.00px;font-size:16.5px;line-height:21px;color:#222;letter-spacing:0.564px;">Pièces</div>
<div class="t" style="left:1419.50px;top:288.00px;font-size:16.5px;line-height:21px;color:#222;letter-spacing:0.883px;">Facturation</div>
<div class="t" style="left:901.60px;top:336.00px;font-size:21.5px;line-height:27px;color:#1e1e1e;letter-spacing:0.329px;">Modification dossier</div>
<div class="t" style="left:901.60px;top:381.00px;font-size:16.5px;line-height:21px;color:#222;letter-spacing:0.996px;">N° Dossier</div>
<div class="t" style="left:1048.10px;top:389.00px;font-size:16.5px;line-height:21px;color:#222;letter-spacing:0.993px;">2455112</div>
<div class="t" style="left:898.30px;top:433.00px;font-size:16.5px;line-height:21px;color:#222;letter-spacing:1.143px;">Libellé</div>
<div class="t" style="left:1045.30px;top:441.00px;font-size:16.5px;line-height:21px;color:#222;letter-spacing:-0.249px;">OBJECT DOSSIER</div>
<div class="t" style="left:1406.70px;top:441.00px;font-size:16.5px;line-height:21px;color:#222;letter-spacing:0.959px;">...</div>
<div class="t" style="left:896.60px;top:492.00px;font-size:16.5px;line-height:21px;color:#222;letter-spacing:1.129px;">Nature</div>
<div class="t" style="left:1047.60px;top:492.00px;font-size:16.5px;line-height:21px;color:#222;letter-spacing:-0.324px;">NATURE</div>
<div class="t" style="left:1406.70px;top:493.00px;font-size:16.5px;line-height:21px;color:#222;letter-spacing:0.959px;">...</div>
<div class="t" style="left:896.60px;top:538.00px;font-size:16.5px;line-height:21px;color:#222;letter-spacing:1.071px;">Date ouverture</div>
<div class="t" style="left:1096.70px;top:546.00px;font-size:16.5px;line-height:21px;color:#222;letter-spacing:1.109px;">01/08/2025</div>
<div class="t" style="left:1250.40px;top:538.00px;font-size:16.5px;line-height:21px;color:#222;letter-spacing:0.862px;">Clôture</div>
<div class="t" style="left:897.10px;top:591.00px;font-size:16.5px;line-height:21px;color:#222;letter-spacing:1.059px;">Client</div>
<div class="t" style="left:1042.50px;top:599.00px;font-size:16.5px;line-height:21px;color:#222;letter-spacing:-0.213px;">FAGA LAMBER</div>
<div class="t" style="left:1404.80px;top:599.00px;font-size:16.5px;line-height:21px;color:#222;letter-spacing:0.959px;">...</div>
<div class="t" style="left:894.30px;top:643.00px;font-size:16.5px;line-height:21px;color:#222;letter-spacing:0.734px;">Adversaire</div>
<div class="t" style="left:1039.50px;top:651.00px;font-size:16.5px;line-height:21px;color:#222;letter-spacing:-0.311px;">ENTREPRISE SAO</div>
<div class="t" style="left:1401.80px;top:651.00px;font-size:16.5px;line-height:21px;color:#222;letter-spacing:0.959px;">...</div>
<div class="t" style="left:894.30px;top:691.00px;font-size:16.5px;line-height:21px;color:#222;letter-spacing:0.772px;">Change niveau</div>
<div class="t" style="left:1075.50px;top:690.00px;font-size:16.5px;line-height:21px;color:#222;letter-spacing:1.182px;">Automatique</div>
<div class="t" style="left:1237.70px;top:690.00px;font-size:16.5px;line-height:21px;color:#222;letter-spacing:0.768px;">Manuel</div>
<div class="t" style="left:893.70px;top:747.00px;font-size:16.5px;line-height:21px;color:#222;letter-spacing:0.800px;">Niveau</div>
<div class="t" style="left:1046.40px;top:747.00px;font-size:16.5px;line-height:21px;color:#222;letter-spacing:0.678px;">Sélectionner</div>
<div class="t" style="left:1306.50px;top:744.00px;font-size:17px;line-height:21px;color:#222;letter-spacing:0.820px;">N°</div>
<div class="t" style="left:924.60px;top:804.00px;font-size:16.5px;line-height:21px;color:#222;letter-spacing:0.963px;">Dossier complet</div>
<div class="t" style="left:1116.60px;top:804.00px;font-size:16.5px;line-height:21px;color:#222;letter-spacing:0.841px;">Dossier pré-archivé</div>
<div class="t" style="left:1337.50px;top:804.00px;font-size:16.5px;line-height:21px;color:#222;letter-spacing:0.832px;">Dossier Archivé</div>
<div class="t" style="left:893.70px;top:849.00px;font-size:16.5px;line-height:21px;color:#222;letter-spacing:0.858px;">Lieu</div>
<div class="t" style="left:1050.50px;top:849.00px;font-size:16.5px;line-height:21px;color:#222;letter-spacing:0.100px;">PALAIS DE JUSTICE</div>
<div class="t" style="left:1404.80px;top:850.00px;font-size:16.5px;line-height:21px;color:#222;letter-spacing:0.959px;">...</div>
<div class="t" style="left:1013.30px;top:943.00px;font-size:16.5px;line-height:21px;color:#222;letter-spacing:0.873px;">Suivant</div>
<div class="t" style="left:894.70px;top:900.00px;font-size:16.5px;line-height:21px;color:#222;letter-spacing:0.856px;">Gestionnaire</div>
<div class="t" style="left:1051.30px;top:900.00px;font-size:16.5px;line-height:21px;color:#222;letter-spacing:-0.171px;">JIRAGNAN FREDERIC</div>
<div class="t" style="left:1404.80px;top:901.00px;font-size:16.5px;line-height:21px;color:#222;letter-spacing:0.959px;">...</div>
<div style="left:1500px;top:321.00px;width:23px;height:21px;overflow:hidden;"><div class="t" style="left:6.40px;top:0px;font-size:16.5px;line-height:21px;color:#222;letter-spacing:-0.083px;">an</div></div>
<div style="left:1510.7px;top:357.00px;width:12.299999999999955px;height:21px;overflow:hidden;"><div class="t" style="left:-6.10px;top:0px;font-size:16.5px;line-height:21px;color:#222;letter-spacing:2.823px;">ur</div></div>
<div style="left:1510.7px;top:392.00px;width:12.299999999999955px;height:21px;overflow:hidden;"><div class="t" style="left:-5.10px;top:0px;font-size:16.5px;line-height:21px;color:#222;letter-spacing:1.823px;">ar</div></div>
<div style="left:1510.7px;top:428.00px;width:12.299999999999955px;height:21px;overflow:hidden;"><div class="t" style="left:-5.10px;top:0px;font-size:16.5px;line-height:21px;color:#222;letter-spacing:1.823px;">ar</div></div>
<div style="left:1510.7px;top:462.00px;width:12.299999999999955px;height:21px;overflow:hidden;"><div class="t" style="left:-5.10px;top:0px;font-size:16.5px;line-height:21px;color:#222;letter-spacing:1.823px;">ar</div></div>
<div style="left:1510.7px;top:497.00px;width:12.299999999999955px;height:21px;overflow:hidden;"><div class="t" style="left:-5.10px;top:0px;font-size:16.5px;line-height:21px;color:#222;letter-spacing:1.823px;">ar</div></div>
<div style="left:1510.7px;top:531.00px;width:12.299999999999955px;height:21px;overflow:hidden;"><div class="t" style="left:-5.10px;top:0px;font-size:16.5px;line-height:21px;color:#222;letter-spacing:1.823px;">ar</div></div>
</body></html>
